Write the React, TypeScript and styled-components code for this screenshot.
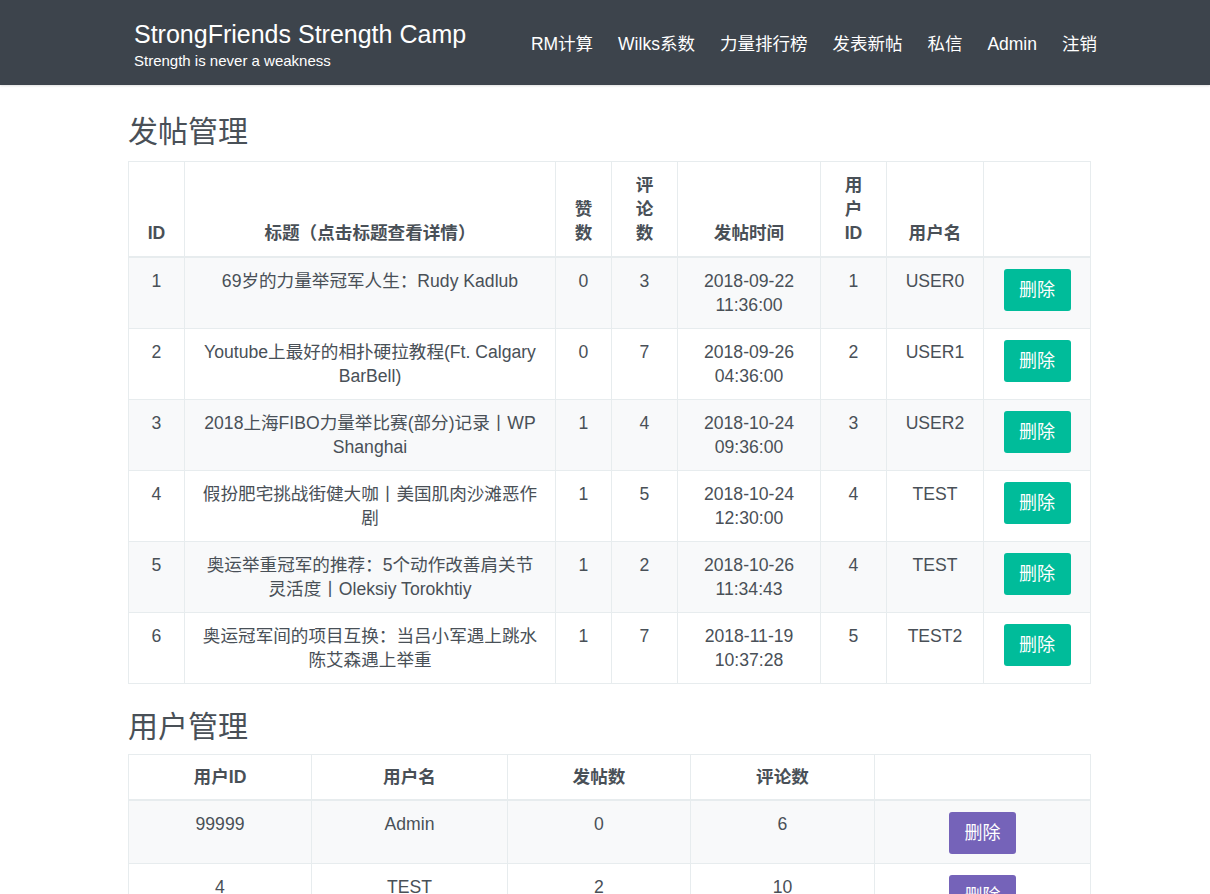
import React from "react";
import styled, { createGlobalStyle } from "styled-components";

const GlobalStyle = createGlobalStyle`
  html, body { margin: 0; padding: 0; background: #fff; }
  body {
    font-family: "Liberation Sans", Arial, "Noto Sans CJK SC", sans-serif;
    font-size: 17.6px;
    line-height: 24px;
    color: #495057;
  }
  * { box-sizing: border-box; }
`;

const NavBar = styled.header`
  height: 85px;
  background: #3d444c;
  display: flex;
  align-items: center;
  justify-content: space-between;
  padding: 0 113px 0 134px;
  box-shadow: 0 1px 2px rgba(0, 0, 0, 0.12);
`;

const Brand = styled.div`
  display: flex;
  flex-direction: column;
  color: #fff;
  margin-top: 4px;
`;

const BrandTitle = styled.span`
  font-size: 25px;
  line-height: 30px;
`;

const BrandSub = styled.span`
  font-size: 15px;
  line-height: 20px;
  margin-top: 2px;
`;

const NavList = styled.nav`
  display: flex;
  align-items: center;
  gap: 25px;
  margin-top: 2px;
`;

const NavLink = styled.a`
  color: #fff;
  font-size: 17.5px;
  line-height: 24px;
  text-decoration: none;
`;

const Container = styled.main`
  width: 962px;
  margin-left: 128px;
  padding-top: 4px;
`;

const Heading = styled.h2<{ $after?: number }>`
  font-size: 30px;
  line-height: 36px;
  font-weight: 400;
  color: #495057;
  margin: 25px 0 ${(p) => p.$after ?? 11}px;
`;

const Table = styled.table`
  width: 962px;
  border-collapse: collapse;
  table-layout: fixed;
  text-align: center;
`;

const Th = styled.th<{ $compact?: boolean }>`
  border: 1px solid #e7ecee;
  border-bottom-width: 2px;
  padding: ${(p) => (p.$compact ? "10px 12px" : "11px 12px")};
  font-weight: 700;
  vertical-align: bottom;
  line-height: 24px;
  color: #495057;
`;

const Tr = styled.tr`
  &:nth-child(odd) {
    background: #f8f9fa;
  }
`;

const Td = styled.td<{ $compact?: boolean }>`
  border: 1px solid #e7ecee;
  padding: 11px 12px ${(p) => (p.$compact ? "9px" : "11px")};
  vertical-align: top;
  line-height: 24px;
`;

const TitleLine = styled.span`
  display: block;
  white-space: nowrap;
`;

const DeleteButton = styled.button<{ $variant: "green" | "purple" }>`
  display: inline-block;
  width: 67px;
  height: 42px;
  border: none;
  border-radius: 3px;
  background: ${(p) => (p.$variant === "green" ? "#00bc9a" : "#7563b9")};
  color: #fff;
  font-family: inherit;
  font-size: 18px;
  line-height: 24px;
  padding: 0;
  cursor: pointer;
`;

type Post = {
  id: number;
  title: string[];
  likes: number;
  comments: number;
  date: string;
  time: string;
  uid: number;
  user: string;
};

const posts: Post[] = [
  { id: 1, title: ["69岁的力量举冠军人生：Rudy Kadlub"], likes: 0, comments: 3, date: "2018-09-22", time: "11:36:00", uid: 1, user: "USER0" },
  { id: 2, title: ["Youtube上最好的相扑硬拉教程(Ft. Calgary", "BarBell)"], likes: 0, comments: 7, date: "2018-09-26", time: "04:36:00", uid: 2, user: "USER1" },
  { id: 3, title: ["2018上海FIBO力量举比赛(部分)记录丨WP", "Shanghai"], likes: 1, comments: 4, date: "2018-10-24", time: "09:36:00", uid: 3, user: "USER2" },
  { id: 4, title: ["假扮肥宅挑战街健大咖丨美国肌肉沙滩恶作", "剧"], likes: 1, comments: 5, date: "2018-10-24", time: "12:30:00", uid: 4, user: "TEST" },
  { id: 5, title: ["奥运举重冠军的推荐：5个动作改善肩关节", "灵活度丨Oleksiy Torokhtiy"], likes: 1, comments: 2, date: "2018-10-26", time: "11:34:43", uid: 4, user: "TEST" },
  { id: 6, title: ["奥运冠军间的项目互换：当吕小军遇上跳水", "陈艾森遇上举重"], likes: 1, comments: 7, date: "2018-11-19", time: "10:37:28", uid: 5, user: "TEST2" },
];

const users = [
  { id: 99999, name: "Admin", posts: 0, comments: 6 },
  { id: 4, name: "TEST", posts: 2, comments: 10 },
];

const postCols = [56, 371, 56, 66, 143, 66, 97, 107];
const userCols = [183, 196, 183, 184, 216];

const navItems = ["RM计算", "Wilks系数", "力量排行榜", "发表新帖", "私信", "Admin", "注销"];

export default function App() {
  return (
    <>
      <GlobalStyle />
      <NavBar>
        <Brand>
          <BrandTitle>StrongFriends Strength Camp</BrandTitle>
          <BrandSub>Strength is never a weakness</BrandSub>
        </Brand>
        <NavList>
          {navItems.map((n) => (
            <NavLink key={n} href="#">
              {n}
            </NavLink>
          ))}
        </NavList>
      </NavBar>
      <Container>
        <Heading>发帖管理</Heading>
        <Table>
          <colgroup>
            {postCols.map((w, i) => (
              <col key={i} style={{ width: w }} />
            ))}
          </colgroup>
          <thead>
            <tr>
              <Th>ID</Th>
              <Th>标题（点击标题查看详情）</Th>
              <Th>
                赞<br />数
              </Th>
              <Th>
                评<br />论<br />数
              </Th>
              <Th>发帖时间</Th>
              <Th>
                用<br />户<br />ID
              </Th>
              <Th>用户名</Th>
              <Th></Th>
            </tr>
          </thead>
          <tbody>
            {posts.map((p) => (
              <Tr key={p.id}>
                <Td>{p.id}</Td>
                <Td>
                  {p.title.map((t) => (
                    <TitleLine key={t}>{t}</TitleLine>
                  ))}
                </Td>
                <Td>{p.likes}</Td>
                <Td>{p.comments}</Td>
                <Td>
                  {p.date}
                  <br />
                  {p.time}
                </Td>
                <Td>{p.uid}</Td>
                <Td>{p.user}</Td>
                <Td>
                  <DeleteButton $variant="green">删除</DeleteButton>
                </Td>
              </Tr>
            ))}
          </tbody>
        </Table>
        <Heading $after={9}>用户管理</Heading>
        <Table>
          <colgroup>
            {userCols.map((w, i) => (
              <col key={i} style={{ width: w }} />
            ))}
          </colgroup>
          <thead>
            <tr>
              <Th $compact>用户ID</Th>
              <Th $compact>用户名</Th>
              <Th $compact>发帖数</Th>
              <Th $compact>评论数</Th>
              <Th $compact></Th>
            </tr>
          </thead>
          <tbody>
            {users.map((u) => (
              <Tr key={u.id}>
                <Td $compact>{u.id}</Td>
                <Td $compact>{u.name}</Td>
                <Td $compact>{u.posts}</Td>
                <Td $compact>{u.comments}</Td>
                <Td $compact>
                  <DeleteButton $variant="purple">删除</DeleteButton>
                </Td>
              </Tr>
            ))}
          </tbody>
        </Table>
      </Container>
    </>
  );
}
